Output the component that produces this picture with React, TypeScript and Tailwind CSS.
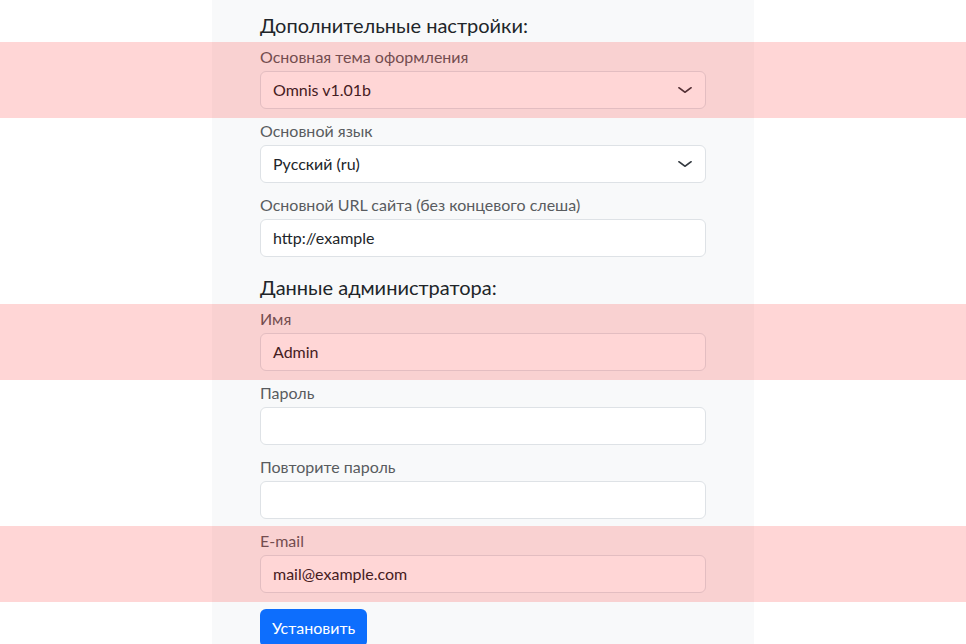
import React from "react";

const font = { fontFamily: 'Lato, "Noto Sans", sans-serif' };

const Chevron = () => (
    <svg viewBox="0 0 16 16" className="absolute right-3 top-1/2 h-3 w-4 -translate-y-1/2" preserveAspectRatio="none">
        <path fill="none" stroke="#343a40" strokeLinecap="round" strokeLinejoin="round" strokeWidth="2" d="m2 5 6 6 6-6" />
    </svg>
);

const Field = ({ label, value, select, marked }: { label: string; value?: string; select?: boolean; marked?: boolean }) => (
    <div className="relative mb-[10px]">
        {marked && (
            <div className="pointer-events-none absolute left-1/2 top-[-3px] z-10 h-[76px] w-[966px] -translate-x-1/2 bg-[rgba(255,0,0,0.16)]"></div>
        )}
        <label className="block h-6 text-[16px] leading-6 text-[#595c5f]">{label}</label>
        <div className="relative mt-[2px] flex h-[38px] items-center rounded-[6px] border border-[#dee2e6] bg-white px-3 text-[16px] text-[#212529]">
            {value}
            {select && <Chevron />}
        </div>
    </div>
);

export default function App() {
    return (
        <div className="h-[644px] overflow-hidden bg-white" style={font}>
            <div className="mx-auto w-[542px] bg-[#f8f9fa] px-12 pt-[13px] pb-10">
                <h5 className="mb-2 text-[20px] leading-6 text-[#212529]">Дополнительные настройки:</h5>
                <Field label="Основная тема оформления" value="Omnis v1.01b" select marked />
                <Field label="Основной язык" value="Русский (ru)" select />
                <Field label="Основной URL сайта (без концевого слеша)" value="http://example" />

                <h5 className="mb-2 pt-2 text-[20px] leading-6 text-[#212529]">Данные администратора:</h5>
                <Field label="Имя" value="Admin" marked />
                <Field label="Пароль" />
                <Field label="Повторите пароль" />
                <Field label="E-mail" value="mail@example.com" marked />

                <button className="mt-[6px] h-[38px] rounded-[6px] bg-[#0d6efd] px-3 text-[16px] text-white">Установить</button>
            </div>
        </div>
    );
}
